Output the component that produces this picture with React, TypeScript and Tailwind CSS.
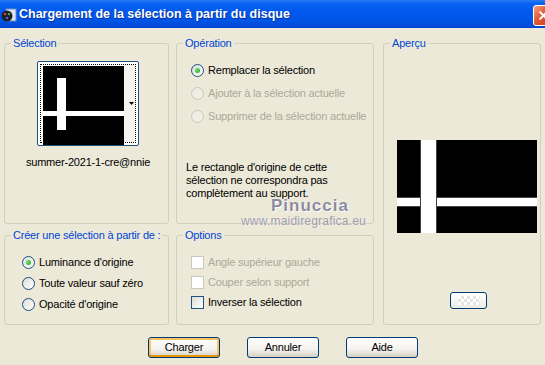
import React from "react";

const font = { fontFamily: '"Liberation Sans", Arial, sans-serif' };

const Radio: React.FC<{ checked?: boolean; disabled?: boolean; label: string }> = ({ checked, disabled, label }) => (
  <div className="flex items-center h-[13px] gap-[4px]">
    <span
      className={
        disabled
          ? "w-[13px] h-[13px] rounded-full border border-[#CAC8BB] bg-[#F0EEE3] flex items-center justify-center"
          : "w-[13px] h-[13px] rounded-full border border-[#1C5180] bg-[linear-gradient(135deg,#DCDCD7,#FFFFFF)] flex items-center justify-center"
      }
    >
      {checked && <span className="w-[5px] h-[5px] rounded-full bg-[radial-gradient(circle_at_35%_35%,#6CE36C,#21A121)]" />}
    </span>
    <span className={disabled ? "text-[#ACA899]" : "text-black"}>{label}</span>
  </div>
);

const Check: React.FC<{ disabled?: boolean; label: string }> = ({ disabled, label }) => (
  <div className="flex items-center h-[13px] gap-[4px]">
    <span
      className={
        disabled
          ? "w-[13px] h-[13px] border border-[#CAC8BB] bg-white"
          : "w-[13px] h-[13px] border border-[#1C5180] bg-[linear-gradient(135deg,#DCDCD7,#FFFFFF)]"
      }
    />
    <span className={disabled ? "text-[#ACA899]" : "text-black"}>{label}</span>
  </div>
);

const Legend: React.FC<{ children: React.ReactNode }> = ({ children }) => (
  <legend className="ml-[6px] px-[2px] leading-[13px] text-[#0046D5]">{children}</legend>
);

const XpButton: React.FC<{ label: string; def?: boolean }> = ({ label, def }) => (
  <button
    className={
      "w-[72px] h-[21px] rounded-[3px] border border-[#003C74] bg-[linear-gradient(to_bottom,#FFFFFF,#F3F2EE_60%,#D6D0C5)] text-[11px] text-black " +
      (def ? "shadow-[inset_0_-2px_0_#E59700,inset_0_0_0_2px_#F8C35E]" : "shadow-[inset_0_-1px_0_#D6D0C5]")
    }
  >
    {label}
  </button>
);

export default function App() {
  return (
    <div className="relative w-[545px] h-[365px] overflow-hidden bg-[#ECE9D8] text-[11px] tracking-[-0.2px]" style={font}>
      {/* title bar */}
      <div className="h-[28px] flex items-center bg-[linear-gradient(to_bottom,#2A7BF5_0%,#0A63F0_12%,#0058EE_40%,#0055E5_75%,#0045CF_100%)]">
        <svg width="16" height="14" viewBox="0 0 16 14" className="ml-[1px] mt-[1px]">
          <rect x="5" y="1" width="10" height="12" fill="#DDE6F5" stroke="#6E8BC0" />
          <circle cx="6" cy="8" r="5.5" fill="#1E1E28" />
          <circle cx="4" cy="6" r="1.3" fill="#D24141" />
          <circle cx="8" cy="6" r="1.3" fill="#3FA63F" />
          <circle cx="6" cy="10" r="1.3" fill="#3C6BD9" />
        </svg>
        <span className="ml-[2px] mt-[1px] text-white font-bold text-[12.5px] tracking-normal [text-shadow:1px_1px_0_#0A2F9A]">
          Chargement de la sélection à partir du disque
        </span>
        <div className="ml-auto mt-[2px] mr-[-9px] w-[21px] h-[21px] rounded-[3px] border border-white bg-[linear-gradient(135deg,#F0A088,#E0582F_45%,#C8401C)] flex items-center justify-center">
          <svg width="11" height="11" viewBox="0 0 11 11">
            <path d="M1.5 1.5 L9.5 9.5 M9.5 1.5 L1.5 9.5" stroke="white" strokeWidth="2" />
          </svg>
        </div>
      </div>

      {/* body */}
      <div className="pt-[9px] pl-[4px]">
        <div className="grid grid-cols-[165px_198px_160px] grid-rows-[187px_96px] gap-x-[7px] gap-y-[5px]">
          <fieldset className="border border-[#D0D0BF] rounded-[3px] h-full">
            <Legend>Sélection</Legend>
            <div className="mt-[11px] ml-[32px] w-[102px] h-[85px] rounded-[2px] border border-[#1C5180] bg-white p-[2px]">
              <div className="w-full h-full border border-dotted border-black flex">
                <svg width="81" height="79" viewBox="0 0 81 79" className="mt-[1px] ml-[2px]">
                  <rect width="81" height="79" fill="#000" />
                  <rect x="0" y="45" width="81" height="5" fill="#fff" />
                  <rect x="14" y="12" width="9" height="52" fill="#fff" />
                </svg>
                <div className="flex-1 bg-[#F4F3EE] flex items-center justify-end pr-[1px]">
                  <svg width="5" height="3" viewBox="0 0 5 3">
                    <path d="M0 0 H5 L2.5 3 Z" fill="#000" />
                  </svg>
                </div>
              </div>
            </div>
            <div className="mt-[10px] leading-[13px] text-center text-black pl-[3px]">summer-2021-1-cre@nnie</div>
          </fieldset>

          <fieldset className="border border-[#D0D0BF] rounded-[3px] h-full">
            <Legend>Opération</Legend>
            <div className="mt-[14px] ml-[14px] flex flex-col gap-[10px]">
              <Radio checked label="Remplacer la sélection" />
              <Radio disabled label="Ajouter à la sélection actuelle" />
              <Radio disabled label="Supprimer de la sélection actuelle" />
            </div>
            <p className="mt-[38px] ml-[9px] leading-[13px] text-black">
              Le rectangle d'origine de cette
              <br />
              sélection ne correspondra pas
              <br />
              complètement au support.
            </p>
          </fieldset>

          <div className="row-span-2 pl-[2px]">
            <fieldset className="border border-[#D0D0BF] rounded-[3px] h-full w-[158px] flex flex-col">
              <Legend>Aperçu</Legend>
              <svg width="140" height="93" viewBox="0 0 140 93" className="mt-[90px] ml-[13px]">
                <rect width="140" height="93" fill="#000" />
                <rect x="0" y="57" width="140" height="10" fill="#444" />
                <rect x="0" y="58" width="140" height="8" fill="#fff" />
                <rect x="23" y="0" width="17" height="93" fill="#444" />
                <rect x="24" y="0" width="15" height="93" fill="#fff" />
              </svg>
              <div className="mt-[59px] ml-[66px] w-[37px] h-[17px] rounded-[3px] border border-[#003C74] bg-[linear-gradient(to_bottom,#FFFFFF,#ECEBE6)] flex items-center justify-center">
                <div className="w-[22px] h-[9px] bg-[repeating-conic-gradient(#E4E4E4_0%_25%,#FFFFFF_0%_50%)] bg-[length:6px_6px]" />
              </div>
            </fieldset>
          </div>

          <fieldset className="border border-[#D0D0BF] rounded-[3px] h-full">
            <Legend>Créer une sélection à partir de :</Legend>
            <div className="mt-[14px] ml-[17px] flex flex-col gap-[8px]">
              <Radio checked label="Luminance d'origine" />
              <Radio label="Toute valeur sauf zéro" />
              <Radio label="Opacité d'origine" />
            </div>
          </fieldset>

          <fieldset className="border border-[#D0D0BF] rounded-[3px] h-full">
            <Legend>Options</Legend>
            <div className="mt-[14px] ml-[14px] flex flex-col gap-[7px]">
              <Check disabled label="Angle supérieur gauche" />
              <Check disabled label="Couper selon support" />
              <Check label="Inverser la sélection" />
            </div>
          </fieldset>
        </div>

        <div className="mt-[12px] ml-[144px] flex gap-[27px]">
          <XpButton def label="Charger" />
          <XpButton label="Annuler" />
          <XpButton label="Aide" />
        </div>
      </div>

      {/* watermark */}
      <div className="absolute left-[271px] top-[193px] text-[17px] font-bold tracking-[1px] text-[#8C8CA0] [text-shadow:0_0_1px_#fff,1px_1px_0_#fff]">
        Pinuccia
      </div>
      <div className="absolute left-[241px] top-[212px] text-[12px] tracking-[0.2px] text-[#9A9AAA] [text-shadow:0_0_1px_#fff]">
        www.maidiregrafica.eu
      </div>
    </div>
  );
}
